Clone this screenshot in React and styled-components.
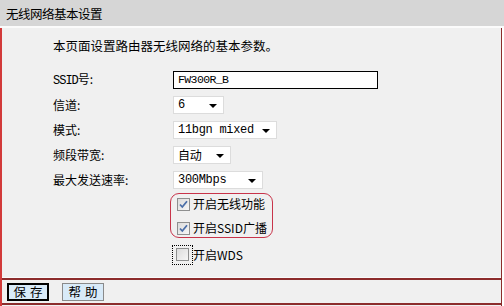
import React from 'react';
import styled, { createGlobalStyle } from 'styled-components';

const GlobalStyle = createGlobalStyle`
  html, body {
    margin: 0;
    padding: 0;
    background: #ffffff;
  }
  body {
    font-family: "Noto Sans CJK SC", "DejaVu Sans", sans-serif;
    font-size: 12px;
    color: #000;
    text-autospace: no-autospace;
  }
`;

const Page = styled.div`
  width: 504px;
  height: 306px;
  display: flex;
  flex-direction: column;
  overflow: hidden;
`;

const Header = styled.div`
  height: 26px;
  flex: none;
  background: #d6d6d6;
  border-bottom: 2px solid #fbfbfb;
  display: flex;
  align-items: center;
  padding-left: 6px;
  font-size: 12.5px;
  letter-spacing: -0.5px;
`;

const Frame = styled.div`
  flex: 1;
  display: flex;
  flex-direction: column;
  margin-right: 2px;
  border-left: 2px solid #d23a3a;
  border-right: 1px solid #8c2c2c;
  background: #f0f0f0;
`;

const Body = styled.div`
  flex: 1;
  padding: 10px 0 0 51px;
  border-bottom: 1px solid #fafafa;
`;

const Intro = styled.div`
  height: 16px;
  line-height: 16px;
  font-size: 12.5px;
  margin-bottom: 13px;
`;

const FormGrid = styled.div`
  display: grid;
  grid-template-columns: 120px auto;
  grid-auto-rows: 25px;
  align-items: center;
`;

const Label = styled.div`
  line-height: 16px;
`;

const Latin = styled.span`
  font-family: "Liberation Mono", "Noto Sans CJK SC", monospace;
  font-size: 12px;
  letter-spacing: -1px;
`;

const TextInput = styled.div`
  width: 199px;
  height: 16px;
  border: 1px solid #000;
  background: #fff;
  display: flex;
  align-items: center;
  padding-left: 4px;
  box-sizing: content-box;
  font-family: "Liberation Mono", monospace;
  font-size: 11.5px;
  letter-spacing: -0.6px;
`;

const Select = styled.div`
  width: ${p => p.$w}px;
  height: 18px;
  box-sizing: border-box;
  border: 1px solid #dcdcdc;
  background: #fff;
  display: flex;
  align-items: center;
  justify-content: space-between;
  padding: 0 6px 0 4px;
  font-family: "Liberation Mono", "Noto Sans CJK SC", monospace;
  font-size: 12px;
  letter-spacing: -0.3px;
  white-space: nowrap;
`;

const Arrow = styled.span`
  width: 0;
  height: 0;
  flex: none;
  border-left: 4px solid transparent;
  border-right: 4px solid transparent;
  border-top: 4px solid #000;
  margin-top: 2px;
`;

const Group = styled.div`
  grid-column: 2;
  grid-row: span 2;
  align-self: start;
  margin: 1px 0 0 -3px;
  width: 103px;
  height: 45px;
  box-sizing: border-box;
  border: 1px solid #c8344a;
  border-radius: 9px;
  padding: 3px 0 0 6px;
  display: flex;
  flex-direction: column;
  gap: 10px;
`;

const CheckRow = styled.div`
  display: flex;
  align-items: center;
  gap: 3px;
  height: 14px;
  line-height: 14px;
  white-space: nowrap;
`;

const FocusWrap = styled.div`
  grid-column: 2;
  margin: 0 0 0 -1px;
  display: flex;
  align-items: center;
  height: 20px;
`;

const FocusBox = styled.div`
  width: 21px;
  height: 20px;
  box-sizing: border-box;
  border: 1px dotted #000;
  display: flex;
  align-items: center;
  justify-content: center;
`;

const Box = styled.span`
  width: 13px;
  height: 13px;
  box-sizing: border-box;
  border: 1px solid #8e8f8f;
  background: linear-gradient(135deg, #dcdcdc, #f6f6f6);
  display: inline-flex;
  align-items: center;
  justify-content: center;
  flex: none;
`;

const Footer = styled.div`
  height: 23px;
  flex: none;
  border-top: 2px solid #8c2c2c;
  border-bottom: 2px solid #8c2c2c;
  margin-bottom: 1px;
  display: flex;
  align-items: center;
  gap: 13px;
  padding-left: 5px;
`;

const Button = styled.button`
  width: 42px;
  height: 18px;
  box-sizing: border-box;
  padding: 0;
  margin: 0;
  background: #d8eaf8;
  border: ${p => (p.$focus ? '2px solid #000' : '1px solid #8a8a8a')};
  font-family: "Noto Sans CJK SC", sans-serif;
  font-size: 12.5px;
  line-height: 14px;
  letter-spacing: 4px;
  text-indent: 4px;
  color: #000;
`;

function Check({ checked }) {
  return (
    <Box>
      {checked && (
        <svg width="9" height="9" viewBox="0 0 9 9">
          <path d="M1 4.5 L3.3 7 L8 1.3" fill="none" stroke="#4a6ea8" strokeWidth="1.8" />
        </svg>
      )}
    </Box>
  );
}

export default function App() {
  return (
    <Page>
      <GlobalStyle />
      <Header>无线网络基本设置</Header>
      <Frame>
        <Body>
          <Intro>本页面设置路由器无线网络的基本参数。</Intro>
          <FormGrid>
            <Label><Latin>SSID</Latin>号:</Label>
            <TextInput>FW300R_B</TextInput>
            <Label>信道:</Label>
            <Select $w={51}>6<Arrow /></Select>
            <Label>模式:</Label>
            <Select $w={104}>11bgn mixed<Arrow /></Select>
            <Label>频段带宽:</Label>
            <Select $w={58}>自动<Arrow /></Select>
            <Label>最大发送速率:</Label>
            <Select $w={90}>300Mbps<Arrow /></Select>
            <Group>
              <CheckRow><Check checked />开启无线功能</CheckRow>
              <CheckRow><Check checked />开启SSID广播</CheckRow>
            </Group>
            <FocusWrap>
              <FocusBox><Check /></FocusBox>
              开启WDS
            </FocusWrap>
          </FormGrid>
        </Body>
        <Footer>
          <Button $focus>保存</Button>
          <Button>帮助</Button>
        </Footer>
      </Frame>
    </Page>
  );
}
